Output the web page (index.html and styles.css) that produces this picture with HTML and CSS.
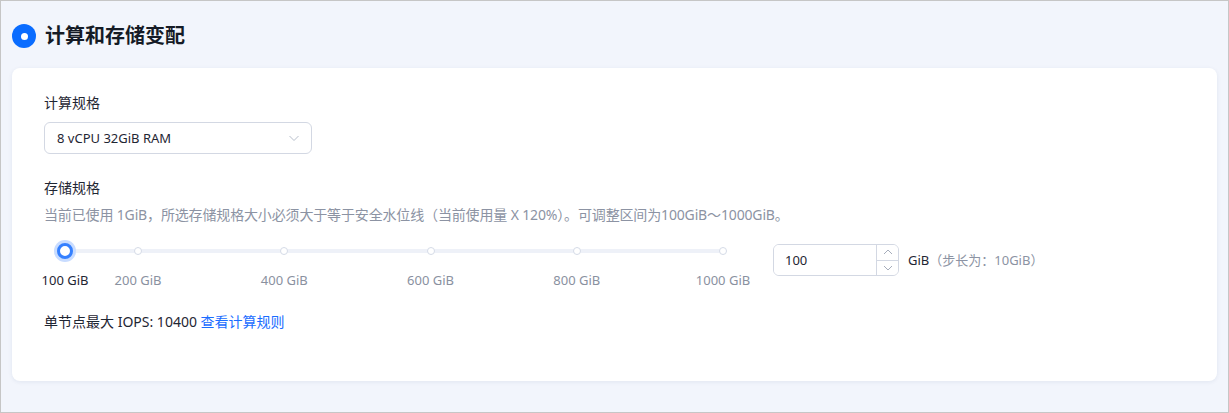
FILE: index.html
```html
<!DOCTYPE html>
<html lang="zh-CN">

<head>
    <meta charset="UTF-8">
    <meta name="viewport" content="width=device-width, initial-scale=1.0">
    <title>计算和存储变配</title>
    <link rel="stylesheet" href="styles.css">
</head>

<body>
    <div class="page">
        <div class="section-title">
            <span class="title-dot"></span>
            <h2>计算和存储变配</h2>
        </div>

        <div class="card">
            <!-- Compute spec -->
            <div class="field-label">计算规格</div>
            <div class="select">
                <span>8 vCPU 32GiB RAM</span>
                <svg class="select-arrow" width="12" height="12" viewBox="0 0 12 12">
                    <path d="M1.5 4 L6 8.5 L10.5 4" fill="none" stroke="#b8bfcc" stroke-width="1" />
                </svg>
            </div>

            <!-- Storage spec -->
            <div class="field-label storage-label">存储规格</div>
            <div class="hint">当前已使用 1GiB，所选存储规格大小必须大于等于安全水位线（当前使用量 X 120%）。可调整区间为100GiB～1000GiB。</div>

            <div class="storage-row">
                <div class="slider">
                    <div class="slider-rail">
                        <span class="mark" style="left: 11.11%"></span>
                        <span class="mark" style="left: 33.33%"></span>
                        <span class="mark" style="left: 55.56%"></span>
                        <span class="mark" style="left: 77.78%"></span>
                        <span class="mark" style="left: 100%"></span>
                        <span class="handle" style="left: 0%"></span>
                    </div>
                    <div class="slider-labels">
                        <span class="active" style="left: 0%">100 GiB</span>
                        <span style="left: 11.11%">200 GiB</span>
                        <span style="left: 33.33%">400 GiB</span>
                        <span style="left: 55.56%">600 GiB</span>
                        <span style="left: 77.78%">800 GiB</span>
                        <span style="left: 100%">1000 GiB</span>
                    </div>
                </div>

                <div class="number-input">
                    <input type="text" value="100">
                    <div class="stepper">
                        <button class="step">
                            <svg width="10" height="6" viewBox="0 0 10 6">
                                <path d="M1 5 L5 1 L9 5" fill="none" stroke="#a6adbb" stroke-width="1" />
                            </svg>
                        </button>
                        <button class="step">
                            <svg width="10" height="6" viewBox="0 0 10 6">
                                <path d="M1 1 L5 5 L9 1" fill="none" stroke="#a6adbb" stroke-width="1" />
                            </svg>
                        </button>
                    </div>
                </div>
                <span class="unit">GiB</span>
                <span class="step-hint">（步长为：10GiB）</span>
            </div>

            <div class="iops">
                单节点最大 IOPS: 10400
                <a href="#" class="link">查看计算规则</a>
            </div>
        </div>
    </div>
</body>

</html>
```

FILE: styles.css
```css
* {
    box-sizing: border-box;
}

body {
    margin: 0;
    font-family: "Noto Sans", "Noto Sans CJK SC", sans-serif;
    color: #1f2633;
}

.page {
    height: 413px;
    border: 1px solid #c6c6c6;
    background: #f2f5fc;
    padding: 0 11px;
}

.section-title {
    display: flex;
    align-items: center;
    gap: 9px;
    height: 28px;
    margin-top: 21px;
    margin-bottom: 18px;
}

.title-dot {
    width: 24px;
    height: 24px;
    border-radius: 50%;
    background: #0a6cff;
    display: flex;
    align-items: center;
    justify-content: center;
}

.title-dot::after {
    content: '';
    width: 7px;
    height: 7px;
    border-radius: 50%;
    background: white;
}

.section-title h2 {
    margin: 0;
    font-size: 20px;
    font-weight: 700;
    line-height: 28px;
    color: #151b26;
}

.card {
    background: white;
    border-radius: 8px;
    box-shadow: 0 1px 4px rgba(30, 50, 100, 0.08);
    padding: 24px 32px 48px;
    height: 313px;
}

.field-label {
    font-size: 14px;
    line-height: 22px;
    color: #1f2633;
}

.select {
    width: 268px;
    height: 32px;
    margin-top: 8px;
    border: 1px solid #d3d8e3;
    border-radius: 6px;
    display: flex;
    align-items: center;
    justify-content: space-between;
    padding: 0 12px;
    font-size: 13px;
    color: #1f2633;
}

.select-arrow {
    margin-right: -1px;
}

.storage-label {
    margin-top: 23px;
}

.hint {
    margin-top: 5px;
    font-size: 14px;
    line-height: 22px;
    letter-spacing: -0.15px;
    color: #8c93a3;
}

.storage-row {
    display: flex;
    align-items: flex-start;
    margin-top: 14px;
}

.slider {
    width: 658px;
    margin-left: 21px;
    margin-right: 50px;
}

.slider-rail {
    position: relative;
    height: 22px;
}

.slider-rail::before {
    content: '';
    position: absolute;
    left: 0;
    right: 0;
    top: 9px;
    height: 4px;
    border-radius: 2px;
    background: #eef1f8;
}

.mark {
    position: absolute;
    top: 7px;
    width: 8px;
    height: 8px;
    margin-left: -4px;
    border-radius: 50%;
    border: 1.5px solid #d5dbe7;
    background: white;
}

.handle {
    position: absolute;
    top: 3px;
    width: 16px;
    height: 16px;
    margin-left: -8px;
    border-radius: 50%;
    border: 3px solid #3580ff;
    background: white;
    box-shadow: 0 0 0 3px #c8dcff;
}

.slider-labels {
    position: relative;
    height: 20px;
    margin-top: 8px;
}

.slider-labels span {
    position: absolute;
    top: 0;
    transform: translateX(-50%);
    white-space: nowrap;
    font-size: 13px;
    line-height: 20px;
    color: #8a919f;
}

.slider-labels span.active {
    color: #1f2633;
}

.number-input {
    display: flex;
    width: 126px;
    height: 32px;
    margin-top: 4px;
    border: 1px solid #d3d8e3;
    border-radius: 6px;
    overflow: hidden;
}

.number-input input {
    flex: 1;
    min-width: 0;
    border: none;
    outline: none;
    padding: 0 11px;
    font: inherit;
    font-size: 13px;
    color: #1f2633;
}

.stepper {
    width: 22px;
    display: flex;
    flex-direction: column;
    border-left: 1px solid #d3d8e3;
}

.step {
    flex: 1;
    border: none;
    background: white;
    padding: 0;
    display: flex;
    align-items: center;
    justify-content: center;
}

.step + .step {
    border-top: 1px solid #d3d8e3;
}

.unit {
    margin-left: 9px;
    margin-top: 4px;
    line-height: 32px;
    font-size: 13px;
    color: #1f2633;
}

.step-hint {
    margin-top: 4px;
    line-height: 32px;
    font-size: 13px;
    color: #8c93a3;
}

.iops {
    margin-top: 21px;
    font-size: 14px;
    line-height: 22px;
    color: #1f2633;
}

.link {
    color: #1a6dff;
    text-decoration: none;
}
```
